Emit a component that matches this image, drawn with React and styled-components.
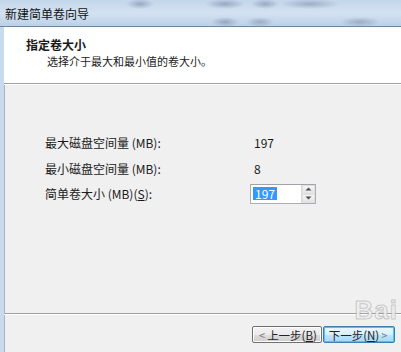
import React from "react";
import styled, { createGlobalStyle } from "styled-components";

const Global = createGlobalStyle`
  html, body { margin: 0; padding: 0; background: #f0f0f0; }
  body { font-family: "Noto Sans CJK SC", "Liberation Sans", sans-serif; }
`;

const Window = styled.div`
  position: relative;
  width: 401px;
  height: 352px;
  display: flex;
  flex-direction: column;
  overflow: hidden;
  font-size: 12px;
  color: #1a1a1a;
`;

const TitleBar = styled.div`
  height: 26px;
  flex: none;
  display: flex;
  align-items: center;
  padding-left: 5px;
  border-bottom: 1px solid #6d86a0;
  background:
    radial-gradient(ellipse 14px 5px at 140px 4px, rgba(90,110,140,0.45), transparent),
    radial-gradient(ellipse 20px 5px at 225px 4px, rgba(90,110,140,0.45), transparent),
    radial-gradient(ellipse 14px 5px at 265px 4px, rgba(90,110,140,0.45), transparent),
    radial-gradient(ellipse 30px 5px at 310px 4px, rgba(90,110,140,0.4), transparent),
    radial-gradient(ellipse 14px 5px at 225px 22px, rgba(90,110,140,0.45), transparent),
    radial-gradient(ellipse 14px 5px at 260px 22px, rgba(90,110,140,0.4), transparent),
    radial-gradient(ellipse 20px 5px at 360px 22px, rgba(90,110,140,0.4), transparent),
    linear-gradient(#c3d6ea, #d3e2f1 50%, #bcd1e7);
`;

const TitleText = styled.span`
  font-size: 12px;
  color: #111;
`;

const Client = styled.div`
  flex: 1;
  display: flex;
  flex-direction: column;
  border-left: 4px solid #c7daee;
  box-shadow: inset 1px 0 0 #a7b5c4;
  background: #f0f0f0;
  min-height: 0;
`;

const Header = styled.div`
  height: 56px;
  flex: none;
  background: #fff;
  padding: 10px 0 0 22px;
  box-sizing: border-box;
  border-top: 1px solid #fff;
`;

const HeaderTitle = styled.div`
  font-weight: bold;
  font-size: 12px;
  line-height: 14px;
`;

const HeaderSub = styled.div`
  font-size: 11px;
  line-height: 14px;
  margin: 2px 0 0 21px;
`;

const Divider = styled.div`
  flex: none;
  height: 1px;
  background: #a0a0a0;
  border-bottom: 1px solid #fff;
`;

const Body = styled.div`
  flex: 1;
  padding: 45px 0 0 41px;
  display: grid;
  grid-template-columns: 205px auto;
  grid-auto-rows: 25.5px;
  align-content: start;
  align-items: center;
`;

const Label = styled.span`
  font-size: 12px;
`;

const Value = styled.span`
  font-size: 12px;
  padding-left: 4px;
`;

const Spin = styled.div`
  display: flex;
  width: 66px;
  height: 20px;
  box-sizing: border-box;
  border: 1px solid #abadb3;
  border-top-color: #a0a3aa;
  background: #fff;
`;

const SpinInput = styled.div`
  flex: 1;
  display: flex;
  align-items: center;
  padding-left: 2px;
`;

const Selected = styled.span`
  background: #3399ff;
  color: #fff;
  font-size: 12px;
  line-height: 13px;
  padding: 0 2px;
`;

const SpinButtons = styled.div`
  width: 13px;
  display: flex;
  flex-direction: column;
  border-left: 1px solid #dadada;
`;

const SpinButton = styled.div`
  flex: 1;
  display: flex;
  align-items: center;
  justify-content: center;
  background: linear-gradient(#f6f6f6, #e4e4e4);
  border: 1px solid #e0e0e0;
`;

const Footer = styled.div`
  height: 37px;
  flex: none;
  display: flex;
  justify-content: flex-end;
  align-items: flex-start;
  padding: 11px 6px 0 0;
  box-sizing: border-box;
  gap: 1px;
`;

const Button = styled.div`
  height: 17px;
  width: ${(p) => p.$w}px;
  box-sizing: border-box;
  display: flex;
  align-items: center;
  justify-content: center;
  font-size: 11.5px;
  border-radius: 2px;
  border: 1px solid ${(p) => (p.$primary ? "#3c7fb1" : "#707070")};
  background: ${(p) =>
    p.$primary
      ? "linear-gradient(#eaf6fd, #d9f0fc 50%, #bee6fd 51%, #a7d9f5)"
      : "linear-gradient(#f2f2f2, #ebebeb 50%, #dddddd 51%, #cfcfcf)"};
  box-shadow: inset 0 0 0 1px ${(p) => (p.$primary ? "#48c4f5" : "#fcfcfc")};
  color: #222;
  white-space: nowrap;
`;

const Chevron = styled.span`
  color: #777;
  font-size: 11px;
  margin: 0 2px;
`;

const Watermark = styled.div`
  position: absolute;
  right: 3px;
  top: 295px;
  font-family: "Liberation Sans", sans-serif;
  font-weight: bold;
  font-size: 26px;
  line-height: 30px;
  color: rgba(238, 238, 238, 0.85);
  -webkit-text-stroke: 1px rgba(150, 150, 150, 0.45);
  letter-spacing: 1px;
  pointer-events: none;
`;

const Arrow = ({ up }) => (
  <svg width="7" height="4" viewBox="0 0 7 4">
    <path d={up ? "M0.5 3.5 L3.5 0.5 L6.5 3.5 Z" : "M0.5 0.5 L3.5 3.5 L6.5 0.5 Z"} fill="#4d4d4d" />
  </svg>
);

export default function App() {
  return (
    <>
      <Global />
      <Window>
        <TitleBar>
          <TitleText>新建简单卷向导</TitleText>
        </TitleBar>
        <Client>
          <Header>
            <HeaderTitle>指定卷大小</HeaderTitle>
            <HeaderSub>选择介于最大和最小值的卷大小。</HeaderSub>
          </Header>
          <Divider />
          <Body>
            <Label>最大磁盘空间量 (MB):</Label>
            <Value>197</Value>
            <Label>最小磁盘空间量 (MB):</Label>
            <Value>8</Value>
            <Label>简单卷大小 (MB)(<u>S</u>):</Label>
            <Spin>
              <SpinInput>
                <Selected>197</Selected>
              </SpinInput>
              <SpinButtons>
                <SpinButton><Arrow up /></SpinButton>
                <SpinButton><Arrow /></SpinButton>
              </SpinButtons>
            </Spin>
          </Body>
          <Divider />
          <Footer>
            <Button $w={70}><Chevron>&lt;</Chevron>上一步(<u>B</u>)</Button>
            <Button $w={72} $primary>下一步(<u>N</u>)<Chevron>&gt;</Chevron></Button>
          </Footer>
        </Client>
        <Watermark>Bai</Watermark>
      </Window>
    </>
  );
}
